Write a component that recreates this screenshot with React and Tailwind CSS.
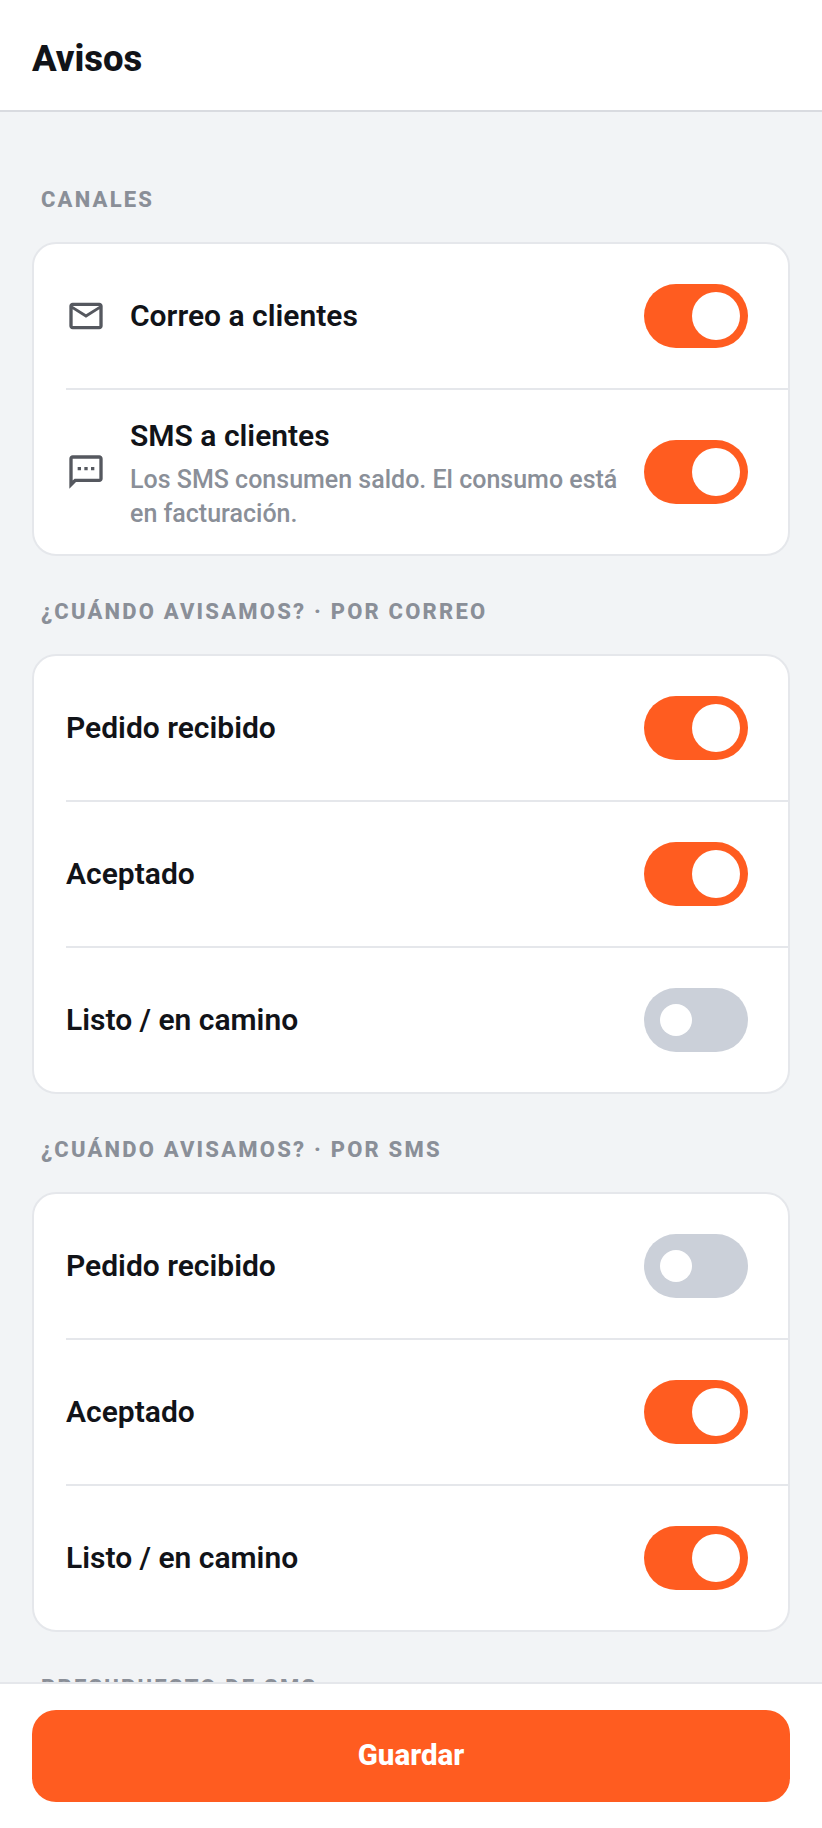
import React from "react";
import { MdOutlineMailOutline, MdOutlineSms } from "react-icons/md";

const Toggle = ({ on }) => (
  <div
    className={
      on
        ? "flex items-center justify-end w-[104px] h-16 rounded-full bg-[#ff5c20] pr-2 shrink-0"
        : "flex items-center justify-start w-[104px] h-16 rounded-full bg-[#cbd0d9] pl-4 shrink-0"
    }
  >
    <div className={on ? "w-12 h-12 rounded-full bg-white" : "w-8 h-8 rounded-full bg-white"} />
  </div>
);

const Label = ({ children }) => (
  <div className="ml-[9px] mt-[41px] mb-[27px] h-[30px] text-[22px] leading-[30px] font-extrabold tracking-[0.1em] text-[#8a8f98] whitespace-nowrap first:mt-0">
    {children}
  </div>
);

const Row = ({ title, on }) => (
  <div className="flex items-center justify-between pr-10 py-10 border-b-2 border-[#e5e7eb] last:border-b-0">
    <span className="text-[30px] leading-[40px] font-semibold text-[#111318]">{title}</span>
    <Toggle on={on} />
  </div>
);

const Card = ({ children }) => (
  <div className="bg-white border-2 border-[#e5e7eb] rounded-[24px] pl-8">{children}</div>
);

const App = () => {
  const correo = [
    { title: "Pedido recibido", on: true },
    { title: "Aceptado", on: true },
    { title: "Listo / en camino", on: false },
  ];
  const sms = [
    { title: "Pedido recibido", on: false },
    { title: "Aceptado", on: true },
    { title: "Listo / en camino", on: true },
  ];

  return (
    <div className="flex flex-col h-screen overflow-hidden bg-[#f2f4f6] font-['Roboto',sans-serif]">
      {/* Header */}
      <header className="flex items-center h-[112px] px-8 pt-2 bg-white border-b-2 border-[#d9dbe0] shrink-0">
        <h1 className="text-[36.5px] font-extrabold text-[#111318]">Avisos</h1>
      </header>

      {/* Settings */}
      <main className="flex-1 overflow-hidden px-8 pt-[73px]">
        <Label>CANALES</Label>
        <Card>
          <div className="flex items-center pr-10 py-10 border-b-2 border-[#e5e7eb]">
            <MdOutlineMailOutline className="w-10 h-10 text-[#55585f] shrink-0" />
            <span className="flex-1 ml-6 text-[30px] leading-[40px] font-semibold text-[#111318]">Correo a clientes</span>
            <Toggle on />
          </div>
          <div className="flex items-center pr-10 py-[23px]">
            <MdOutlineSms className="w-10 h-10 text-[#55585f] shrink-0" />
            <div className="flex-1 ml-6 mr-[22px] pt-[3px]">
              <div className="text-[30px] leading-[40px] font-semibold text-[#111318]">SMS a clientes</div>
              <div className="mt-[7px] text-[25px] leading-[34px] font-medium text-[#8a8f98]">
                Los SMS consumen saldo. El consumo está en facturación.
              </div>
            </div>
            <Toggle on />
          </div>
        </Card>

        <Label>¿CUÁNDO AVISAMOS? · POR CORREO</Label>
        <Card>
          {correo.map((item, index) => (
            <Row key={index} title={item.title} on={item.on} />
          ))}
        </Card>

        <Label>¿CUÁNDO AVISAMOS? · POR SMS</Label>
        <Card>
          {sms.map((item, index) => (
            <Row key={index} title={item.title} on={item.on} />
          ))}
        </Card>

        <Label>PRESUPUESTO DE SMS</Label>
      </main>

      {/* Footer */}
      <footer className="h-[146px] px-8 pt-[26px] bg-white border-t-2 border-[#e5e7eb] shrink-0">
        <button className="w-full h-[92px] pb-0.5 rounded-[24px] bg-[#ff5c20] text-white text-[29.5px] font-extrabold">Guardar</button>
      </footer>
    </div>
  );
};

export default App;
